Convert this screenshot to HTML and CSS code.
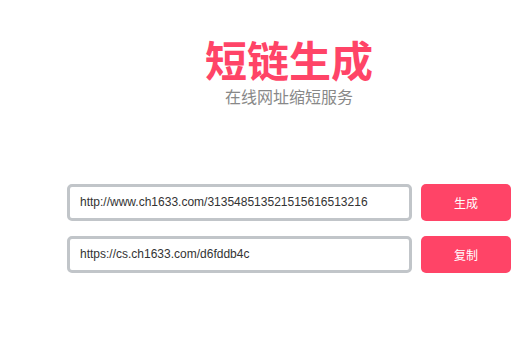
FILE: index.html
```html
<!DOCTYPE html>
<html lang="zh">
<head>
<meta charset="utf-8">
<title>短链生成</title>
<link rel="stylesheet" href="styles.css">
</head>
<body>
<div class="page">
  <header class="hero">
    <h1 class="title">短链生成</h1>
    <p class="subtitle">在线网址缩短服务</p>
  </header>
  <div class="form">
    <div class="row">
      <div class="field">http://www.ch1633.com/313548513521515616513216</div>
      <button class="btn">生成</button>
    </div>
    <div class="row">
      <div class="field">https://cs.ch1633.com/d6fddb4c</div>
      <button class="btn">复制</button>
    </div>
  </div>
</div>
</body>
</html>
```

FILE: styles.css
```css
html, body {
  margin: 0;
  padding: 0;
  background: #fff;
}
body {
  font-family: "Liberation Sans", Arial, "Noto Sans CJK SC", sans-serif;
  width: 523px;
  height: 361px;
  overflow: hidden;
}
.page {
  margin-left: 67px;
  width: 444px;
  padding-top: 39px;
}
.hero {
  text-align: center;
}
.title {
  margin: 0;
  font-family: "Liberation Sans", "Noto Sans CJK SC", sans-serif;
  font-weight: 700;
  font-size: 42px;
  line-height: 48px;
  color: #ff4467;
}
.subtitle {
  margin: 0;
  font-family: "Liberation Sans", "Noto Sans CJK SC", sans-serif;
  font-size: 16px;
  line-height: 22px;
  color: #888;
}
.form {
  margin-top: 75px;
  display: flex;
  flex-direction: column;
  gap: 15px;
}
.row {
  display: flex;
  gap: 9px;
  height: 37px;
}
.field {
  box-sizing: border-box;
  width: 345px;
  height: 37px;
  border: 3px solid #c1c5c9;
  border-radius: 5px;
  padding-left: 10px;
  font-size: 12px;
  line-height: 31px;
  color: #333;
  white-space: nowrap;
  overflow: hidden;
}
.btn {
  width: 90px;
  height: 37px;
  border: none;
  border-radius: 5px;
  background: #ff4467;
  color: #fff;
  font-family: "Noto Sans CJK SC", sans-serif;
  font-size: 12px;
  padding: 0;
}
```
